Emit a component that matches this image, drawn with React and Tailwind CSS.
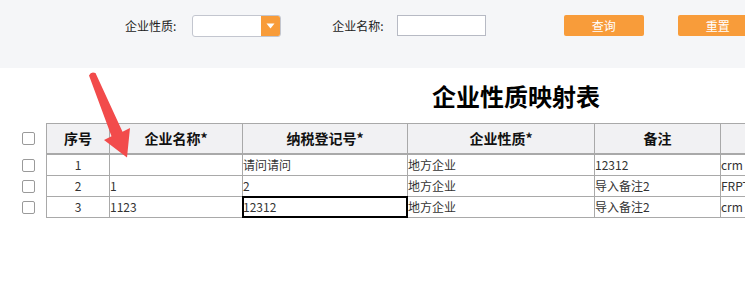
const font = { fontFamily: '"Microsoft YaHei", "Noto Sans CJK SC", "Noto Sans", sans-serif' };

const rows = [
  { id: 1, name: '', tax: '请问请问', type: '地方企业', note: '12312', extra: 'crm' },
  { id: 2, name: '1', tax: '2', type: '地方企业', note: '导入备注2', extra: 'FRPT' },
  { id: 3, name: '1123', tax: '12312', type: '地方企业', note: '导入备注2', extra: 'crm', selected: true }
];

const cols = [
  { key: 'id', title: '序号', w: 'w-[64px]', center: true },
  { key: 'name', title: '企业名称*', w: 'w-[133px]' },
  { key: 'tax', title: '纳税登记号*', w: 'w-[165px]' },
  { key: 'type', title: '企业性质*', w: 'w-[187px]' },
  { key: 'note', title: '备注', w: 'w-[126px]' },
  { key: 'extra', title: '', w: 'w-[200px]' }
];

function Checkbox() {
  return <span className="block w-[13px] h-[13px] rounded-[2px] border border-[#9a9a9a] bg-white" />;
}

function Arrow() {
  return (
    <svg className="absolute left-0 top-0 pointer-events-none" width="745" height="290">
      <path
        d="M89 75.5 Q91 71 95.5 73 L122.5 131.7 L130 128 L127 157.5 L104 140 L111.5 136.3 Z"
        fill="#f24b4b"
      />
    </svg>
  );
}

export default function App() {
  return (
    <div className="relative w-[745px] h-[290px] overflow-hidden bg-white text-[#333]" style={font}>
      <div className="h-[68px] w-[800px] bg-[#f5f6f8] flex items-start pt-[15px] text-[12px] whitespace-nowrap">
        <span className="ml-[125px] shrink-0 mt-[3px] leading-[16px] text-[#222]">企业性质:</span>
        <div className="ml-[16px] shrink-0 flex h-[22px] w-[89px] rounded-[3px] border border-[#c3c6cf] bg-white overflow-hidden">
          <div className="flex-1" />
          <div className="w-[19px] bg-[#f89c3a] flex items-center justify-center">
            <svg width="9" height="6" viewBox="0 0 9 6">
              <path d="M0.5 0.5 L8.5 0.5 L4.5 5.5 Z" fill="#fff" />
            </svg>
          </div>
        </div>
        <span className="ml-[51px] shrink-0 mt-[3px] leading-[16px] text-[#222]">企业名称:</span>
        <div className="ml-[13px] shrink-0 h-[21px] w-[89px] border border-[#b7bac4] bg-white" />
        <button className="ml-[78px] shrink-0 h-[21px] w-[80px] rounded-[2px] bg-[#f89c3a] text-white text-[12px] leading-[21px]">查询</button>
        <button className="ml-[34px] shrink-0 h-[21px] w-[80px] rounded-[2px] bg-[#f89c3a] text-white text-[12px] leading-[21px]">重置</button>
      </div>

      <div className="w-[1032px] h-[55px] flex items-center justify-center">
        <h1 className="text-[24px] font-bold text-black leading-[32px] mt-[1px]">企业性质映射表</h1>
      </div>

      <div className="flex flex-col w-[1000px]">
        <div className="flex">
          <div className="w-[46px] shrink-0 pl-[22px] flex items-center pb-[2px]">
            <Checkbox />
          </div>
          {cols.map((c, i) => (
            <div
              key={c.key}
              className={`${c.w} h-[32px] shrink-0 border-t border-r border-b-2 border-[#a9a9a9] bg-[#f1f1f3] flex items-center justify-center text-[14px] font-bold text-[#111] ${i === 0 ? 'border-l' : ''}`}
            >
              {c.title}
            </div>
          ))}
        </div>
        {rows.map((r) => (
          <div key={r.id} className="flex">
            <div className="w-[46px] shrink-0 pl-[22px] flex items-center">
              <Checkbox />
            </div>
            {cols.map((c, i) => (
              <div
                key={c.key}
                className={`${c.w} relative h-[21px] shrink-0 border-r border-b border-[#a9a9a9] flex items-center text-[12px] leading-[20px] ${i === 0 ? 'border-l' : ''} ${c.center ? 'justify-center' : ''}`}
              >
                {r[c.key]}
                {r.selected && c.key === 'tax' && (
                  <div className="absolute -left-px -top-px right-[-1px] bottom-[-1px] border-2 border-black" />
                )}
              </div>
            ))}
          </div>
        ))}
      </div>

      <Arrow />
    </div>
  );
}
